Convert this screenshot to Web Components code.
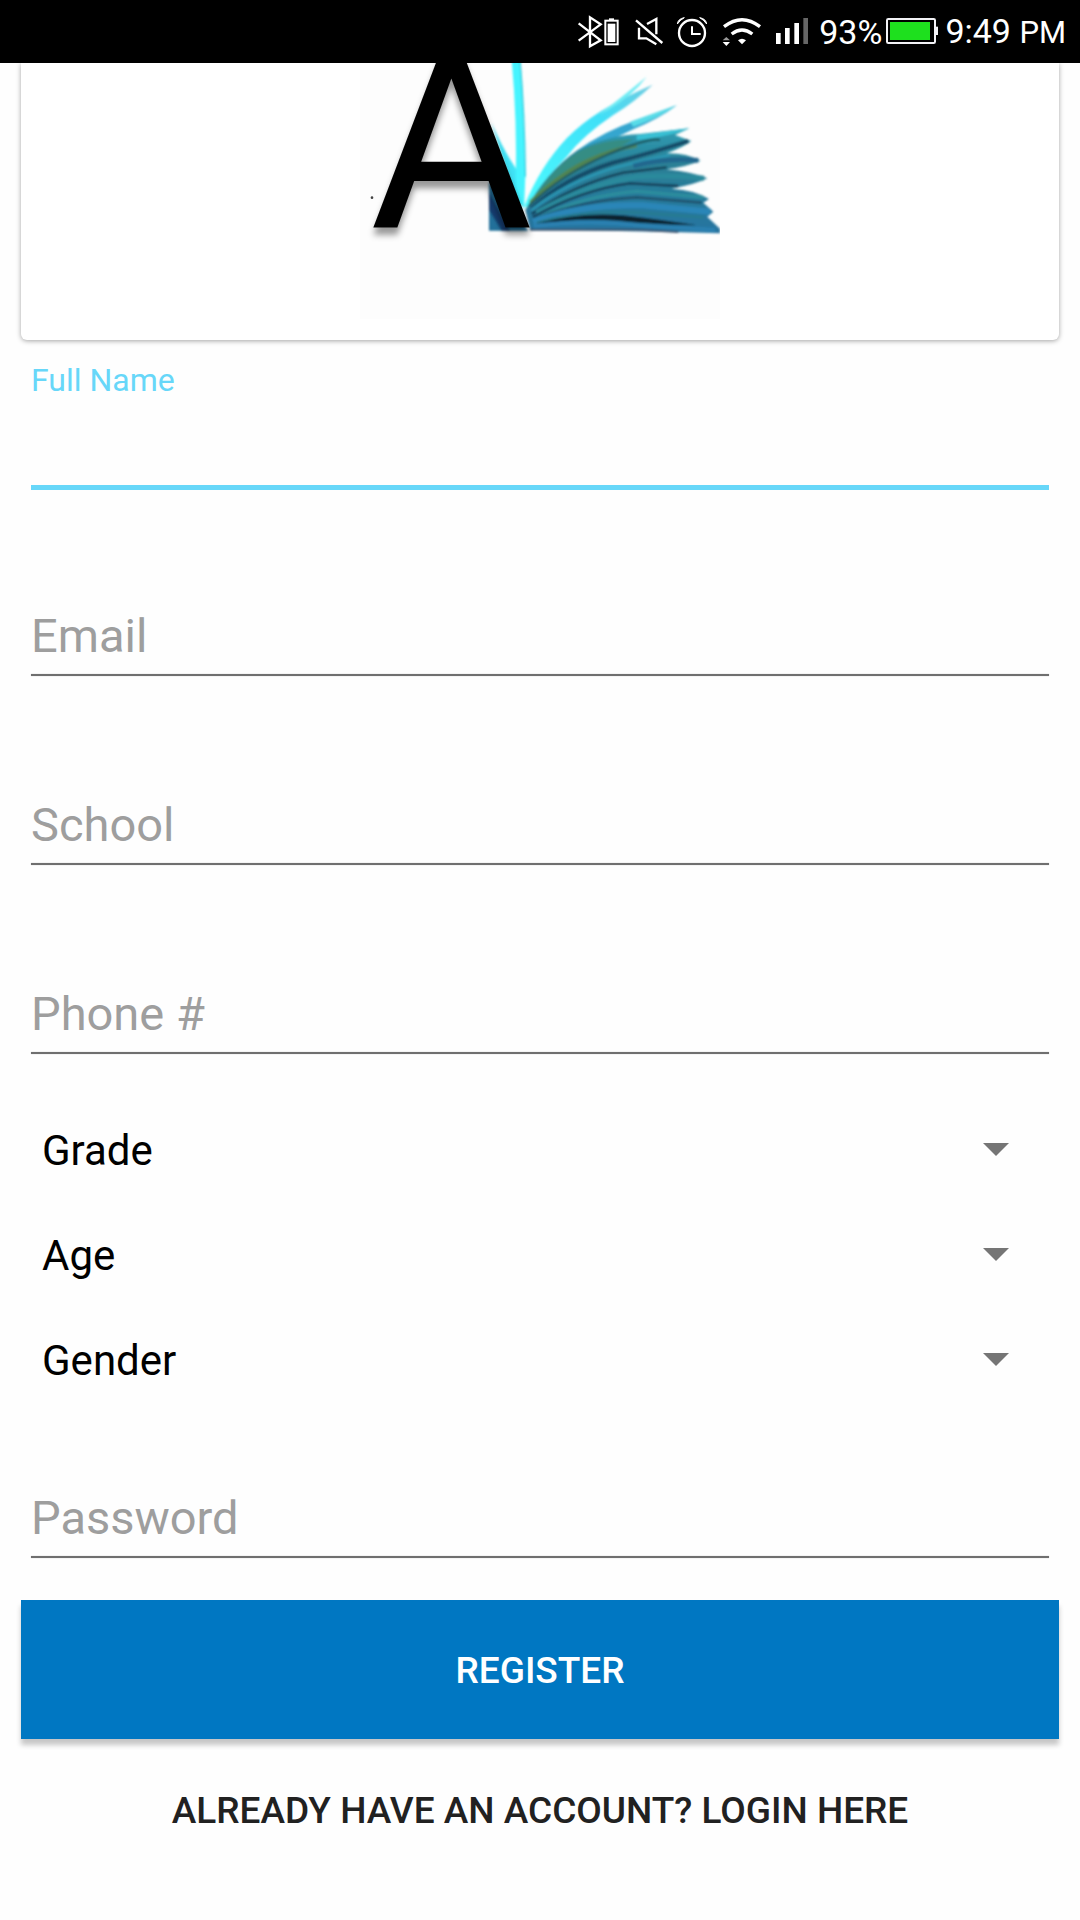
<!DOCTYPE html>
<html lang="en">
<head>
<meta charset="utf-8">
<meta name="viewport" content="width=device-width, initial-scale=1">
<title>Register</title>
<style>
  html, body { margin: 0; background: #fefefe; }
  body { font-family: Roboto, "Liberation Sans", sans-serif; color: #000; }
</style>
</head>
<body>
<register-screen></register-screen>

<script>
const define = (name, html, setup) => {
  const template = document.createElement('template');
  template.innerHTML = html;
  customElements.define(name, class extends HTMLElement {
    connectedCallback() {
      if (this.shadowRoot) return;
      const root = this.attachShadow({ mode: 'open' });
      root.append(template.content.cloneNode(true));
      if (setup) setup(this, root);
    }
  });
};

/* Status bar glyphs: [width in px, viewBox, drawing] */
const ICONS = {
  bluetooth: [57, '30 0 171 189', `
    <path d="M56 70 L122 121 L90 139 V52 L122 73 L56 122" fill="none" stroke="#fff" stroke-width="7"/>
    <rect x="136" y="62" width="37" height="71" fill="none" stroke="#fff" stroke-width="6"/>
    <rect x="147" y="55" width="15" height="7" fill="#fff"/>
    <rect x="143" y="71" width="23" height="55" fill="#fff"/>`],
  mute: [43, '201 0 129 189', `
    <path d="M261 72 L289 57 V103 M237 83 V115 H259 L289 133" fill="none" stroke="#fff" stroke-width="7"/>
    <path d="M228 61 L307 129" stroke="#fff" stroke-width="7"/>`],
  alarm: [45, '330 0 135 189', `
    <circle cx="396" cy="99" r="39" fill="none" stroke="#fff" stroke-width="7"/>
    <path d="M396 79 V102 H422" fill="none" stroke="#fff" stroke-width="6"/>
    <path d="M352 72 Q354 56 373 53 Q361 59 352 72Z M440 72 Q438 56 419 53 Q431 59 440 72Z" fill="#fff" stroke="#fff" stroke-width="3"/>`],
  wifi: [53, '465 0 159 189', `
    <path d="M492 80 Q546 38 600 80" fill="none" stroke="#fff" stroke-width="10"/>
    <path d="M515 102 Q546 78 577 102" fill="none" stroke="#fff" stroke-width="10"/>
    <path d="M534 121 Q546 112 558 121 L546 133Z" fill="#fff"/>
    <path d="M488 121 L499 111 L510 121Z" fill="#999"/>
    <path d="M488 126 H510 L499 138Z" fill="#fff"/>`],
  signal: [48, '624 0 144 189', `
    <path d="M648 99h14v33h-14z M675 84h14v48h-14z M703 69h14v63h-14z" fill="#fff"/>
    <path d="M730 54h14v78h-14z" fill="#666"/>`],
  battery: [58, '222 0 174 189', `
    <rect x="234" y="57" width="144" height="72" rx="4" fill="none" stroke="#f2f2f6" stroke-width="6"/>
    <rect x="380" y="80" width="7" height="25" fill="#f2f2f6"/>
    <rect x="243" y="66" width="120" height="54" fill="#1ee01e"/>`]
};

define('status-icon', `
  <style>:host { display: block; flex: none; } svg { display: block; height: 63px; }</style>
  <svg aria-hidden="true"></svg>`, (host, root) => {
  const [width, box, art] = ICONS[host.getAttribute('name')];
  const svg = root.querySelector('svg');
  svg.setAttribute('viewBox', box);
  svg.setAttribute('width', width);
  svg.innerHTML = art;
});

define('status-bar', `
  <style>
    :host { display: flex; justify-content: flex-end; align-items: center; height: 63px;
      padding-right: 14px; background: #000; color: #fff; font-size: 34px; line-height: 40px; white-space: nowrap; }
    .level { margin: 0 1px 0 3px; }
    .time { margin-left: 4px; }
    small { font-size: 31px; }
  </style>
  <status-icon name="bluetooth"></status-icon>
  <status-icon name="mute"></status-icon>
  <status-icon name="alarm"></status-icon>
  <status-icon name="wifi"></status-icon>
  <status-icon name="signal"></status-icon>
  <span class="level">93%</span>
  <status-icon name="battery"></status-icon>
  <span class="time">9:49 <small>PM</small></span>`);

define('brand-logo', `
  <style>
    :host { display: block; }
    svg { display: block; width: 360px; height: 256px; }
    text { font-family: Roboto, "Liberation Sans", sans-serif; font-size: 750px; filter: drop-shadow(0 22px 9px rgba(0,0,0,.4)); }
  </style>
  <svg viewBox="30 9 1080 768" role="img" aria-label="Logo">
    <defs>
      <filter id="edge" x="-10%" y="-10%" width="120%" height="120%"><feGaussianBlur stdDeviation="3"/></filter>
      <linearGradient id="pages" x1="0" y1="0" x2="0" y2="1">
        <stop offset="0" stop-color="#2f9db4"/><stop offset=".35" stop-color="#2a8096"/><stop offset="1" stop-color="#2574a0"/>
      </linearGradient>
      <linearGradient id="leaf" x1="0" y1="1" x2="1" y2="0">
        <stop offset="0" stop-color="#4cfbff"/><stop offset=".65" stop-color="#3fe0f8"/><stop offset="1" stop-color="#6fcbe0"/>
      </linearGradient>
    </defs>
    <rect x="30" y="9" width="1080" height="768" fill="#fdfdfd"/>
    <g filter="url(#edge)">
      <path d="M417 365 L470 430 L535 512 H417Z" fill="#22709a"/>
      <path d="M417 395 L480 512 H455 L417 450Z" fill="#123e70"/>
      <path d="M425 190 Q455 260 497 325 L522 440 L500 430Z" fill="#3fe3f6"/>
      <path d="M485 0 H511 Q522 150 526 350 L522 450 L497 380 Q502 180 485 0Z" fill="#45f4ff"/>
      <path d="M510 0 Q524 160 526 350" fill="none" stroke="#35cadb" stroke-width="4"/>
      <path d="M522 440 Q570 320 650 235 Q730 150 908 74 Q855 125 790 165 Q700 225 650 290 Q580 360 532 440Z" fill="url(#leaf)"/>
      <path d="M745 165 Q810 115 890 50 Q850 105 775 150Z" fill="#6fecf4"/>
      <path d="M680 272 Q760 215 860 180 L980 136 Q930 175 850 208 L720 270Z" fill="#35a6cf"/>
      <path d="M840 185 L980 136 Q930 172 850 200Z" fill="#58dce8"/>
      <path d="M526 450 Q590 335 680 272 Q770 225 870 222 L1018 205 L975 225 L1024 243 Q1000 262 950 280 Q1005 278 1052 302 Q1015 318 950 328 Q1025 335 1072 355 Q1040 372 965 386 Q1035 390 1077 417 L1060 428 L1090 455 L1072 470 L1110 506 V520 L960 516 L540 508Z" fill="url(#pages)"/>
      <path d="M527 448 Q600 325 690 272 Q770 235 850 238 Q720 310 590 390Z" fill="#348d84"/>
      <path d="M860 226 Q940 215 1018 205 Q960 230 860 240Z" fill="#37c0d4"/>
      <path d="M540 428 Q640 335 720 300 T860 256" fill="none" stroke="#66812f" stroke-width="13" opacity=".6"/>
      <path d="M536 438 Q640 340 770 285 T930 240" fill="none" stroke="#1f5a62" stroke-width="7"/>
      <path d="M545 447 Q640 355 790 308 Q900 280 1015 243" fill="none" stroke="#194c68" stroke-width="13"/>
      <path d="M545 450 Q650 365 800 322 Q880 300 960 285" fill="none" stroke="#2b97b4" stroke-width="8"/>
      <path d="M850 318 Q940 292 1045 301" fill="none" stroke="#24668e" stroke-width="14"/>
      <path d="M545 462 Q670 375 820 338 L950 322" fill="none" stroke="#123c53" stroke-width="7"/>
      <path d="M560 458 Q700 375 860 350 Q970 345 1062 355" fill="none" stroke="#2b8a9c" stroke-width="15"/>
      <path d="M548 472 Q690 390 840 370 L985 378" fill="none" stroke="#143a54" stroke-width="7"/>
      <path d="M560 474 Q700 408 860 394 L1060 412" fill="none" stroke="#2d8f9e" stroke-width="9"/>
      <path d="M550 477 Q700 420 860 412 L1055 428" fill="none" stroke="#1b4c66" stroke-width="7"/>
      <path d="M550 484 Q700 430 880 436 L1080 455" fill="none" stroke="#2c86b8" stroke-width="18"/>
      <path d="M560 488 Q690 450 860 458 L1060 472" fill="none" stroke="#277c92" stroke-width="8"/>
      <path d="M560 490 Q690 455 820 466 Q940 480 1040 496 Q880 492 800 482 Q680 472 560 494Z" fill="#08202f"/>
      <path d="M550 498 Q720 478 870 496 L1095 510" fill="none" stroke="#2a80b0" stroke-width="13"/>
      <path d="M540 509 H870 L985 516" fill="none" stroke="#3b5470" stroke-width="6"/>
    </g>
    <text x="59" y="503" fill="#000">A</text>
    <circle cx="66" cy="413" r="4" fill="#444"/>
  </svg>`);

define('logo-card', `
  <style>
    :host { display: flex; justify-content: center; padding-bottom: 21px; background: #fff;
      border-radius: 0 0 6px 6px; box-shadow: 0 1px 5px rgba(0,0,0,.36); }
  </style>
  <slot></slot>`);

define('text-field', `
  <style>
    :host { display: grid; grid-template-rows: 38px 20px 66px 5px; padding: 0 10px; }
    label { grid-area: 3 / 1; z-index: 1; pointer-events: none; color: #9e9e9e; font-size: 47px; line-height: 56px; }
    input { grid-area: 3 / 1; min-width: 0; box-sizing: border-box; border: 0; outline: 0; margin: 0; padding: 0 0 10px;
      background: none; font: inherit; font-size: 47px; line-height: 56px; color: #212121; }
    .line { grid-area: 4 / 1; height: 2px; background: #6f6f6f; box-shadow: 0 0 1px #999; }
    :host([active]) label, :host(:focus-within) label { grid-area: 1 / 1; color: #67d7f9; font-size: 32px; line-height: 38px; }
    :host([active]) .line, :host(:focus-within) .line { height: 5px; background: #67d7f9; box-shadow: none; }
  </style>
  <label for="control"></label>
  <input id="control">
  <div class="line"></div>`, (host, root) => {
  root.querySelector('label').textContent = host.getAttribute('label');
  root.querySelector('input').type = host.getAttribute('type') || 'text';
});

define('drop-down', `
  <style>
    :host { display: grid; align-items: center; height: 105px; }
    select { grid-area: 1 / 1; appearance: none; box-sizing: border-box; width: 100%; height: 100%; margin: 0; border: 0; outline-offset: -2px;
      padding: 2px 90px 0 21px; background: none; color: #000; font: inherit; font-size: 42px; line-height: 50px; }
    svg { grid-area: 1 / 1; justify-self: end; margin-right: 50px; pointer-events: none; }
  </style>
  <select></select>
  <svg width="26" height="13" viewBox="0 0 26 13" aria-hidden="true"><path d="M0 0H26L13 13Z" fill="#757575"/></svg>`, (host, root) => {
  const select = root.querySelector('select');
  const name = host.getAttribute('label');
  select.setAttribute('aria-label', name);
  select.add(new Option(name));
});

define('raised-button', `
  <style>
    :host { display: block; }
    button { display: block; box-sizing: border-box; width: 100%; height: 139px; border: 0; padding: 2px 0 0; background: #0077c2; color: #fff;
      font: inherit; font-size: 37px; font-weight: 500; line-height: 44px; box-shadow: 0 6px 5px rgba(0,0,0,.22); cursor: pointer; }
  </style>
  <button type="button"><slot></slot></button>`);

define('flat-link', `
  <style>
    :host { display: block; text-align: center; }
    a { color: #212121; text-decoration: none; font-size: 37px; font-weight: 500; line-height: 44px; }
  </style>
  <a href="#login"><slot></slot></a>`);

define('register-screen', `
  <style>
    :host { display: block; }
    main { padding: 0 21px; }
    .fields { display: grid; gap: 60px; padding-top: 21px; }
    .choices { padding: 40px 0 20px; }
    raised-button { margin: 39px 0 50px; }
    flat-link { padding-bottom: 50px; }
  </style>
  <status-bar></status-bar>
  <main>
    <logo-card><brand-logo></brand-logo></logo-card>
    <div class="fields">
      <text-field label="Full Name" active></text-field>
      <text-field label="Email" type="email"></text-field>
      <text-field label="School"></text-field>
      <text-field label="Phone #" type="tel"></text-field>
    </div>
    <div class="choices">
      <drop-down label="Grade"></drop-down>
      <drop-down label="Age"></drop-down>
      <drop-down label="Gender"></drop-down>
    </div>
    <text-field label="Password" type="password"></text-field>
    <raised-button>REGISTER</raised-button>
    <flat-link>ALREADY HAVE AN ACCOUNT? LOGIN HERE</flat-link>
  </main>`);
</script>
</body>
</html>
